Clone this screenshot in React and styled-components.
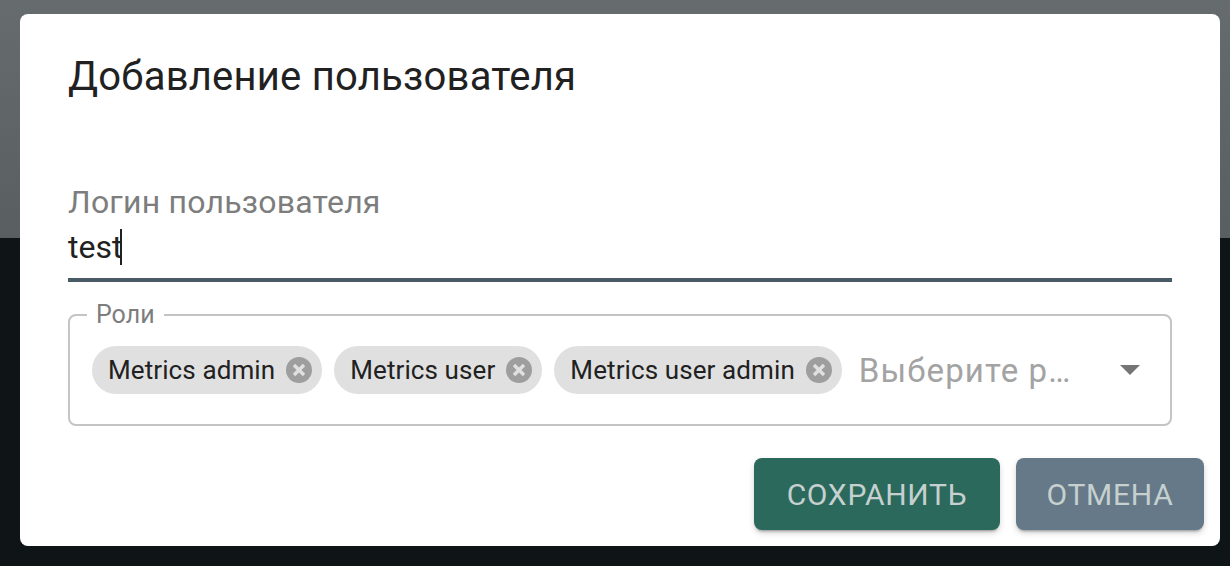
import React from 'react';
import styled, { createGlobalStyle } from 'styled-components';

const GlobalStyle = createGlobalStyle`
  html, body {
    margin: 0;
    padding: 0;
    height: 100%;
    overflow: hidden;
    background: #0f1416;
    font-family: Roboto, "Liberation Sans", sans-serif;
  }
`;

const Backdrop = styled.div`
  box-sizing: border-box;
  width: 1230px;
  height: 566px;
  padding: 14px 10px 20px 20px;
  background: linear-gradient(180deg, #666b6d 0, #595e60 238px, #0f1416 238px);
`;

const Dialog = styled.div`
  box-sizing: border-box;
  display: flex;
  flex-direction: column;
  height: 532px;
  padding: 0 16px 16px 48px;
  background: #fff;
  border-radius: 8px;
`;

const Title = styled.h2`
  margin: 38px 0 0;
  font-size: 40px;
  line-height: 50px;
  font-weight: 400;
  letter-spacing: 0.22px;
  color: #212121;
`;

const LoginField = styled.div`
  display: flex;
  flex-direction: column;
  margin: 82px 32px 0 0;
  border-bottom: 4px solid #4a5b68;
`;

const FieldLabel = styled.label`
  font-size: 32px;
  line-height: 36px;
  letter-spacing: 0.22px;
  color: #7d7d7d;
`;

const FieldValue = styled.div`
  display: flex;
  align-items: center;
  height: 54px;
  margin-bottom: 4px;
  font-size: 32px;
  color: #212121;
`;

const Caret = styled.span`
  width: 2px;
  height: 36px;
  margin-left: -2px;
  background: #212121;
`;

const RolesBox = styled.fieldset`
  box-sizing: border-box;
  display: flex;
  align-items: center;
  gap: 17px;
  height: 123px;
  margin: 21px 32px 0 0;
  padding: 19px 22px 0 22px;
  border: 2px solid #c4c4c4;
  border-radius: 8px;
`;

const RolesLegend = styled.legend`
  margin-left: -5px;
  padding: 0 9px;
  font-size: 25px;
  line-height: 24px;
  color: #7d7d7d;
`;

const Chips = styled.div`
  display: flex;
  align-items: center;
  gap: 12px;
`;

const Chip = styled.div`
  display: flex;
  align-items: center;
  gap: 11px;
  height: 48px;
  padding: 0 10px 0 16px;
  background: #e0e0e0;
  border-radius: 24px;
  font-size: 26px;
  letter-spacing: 0.1px;
  color: #212121;
  white-space: nowrap;
`;

const RolesPlaceholder = styled.span`
  flex: 1;
  font-size: 33px;
  letter-spacing: 1.1px;
  color: #a3a3a3;
  white-space: nowrap;
`;

const ArrowIcon = styled.svg`
  flex: none;
  width: 20px;
  height: 10px;
  margin-right: 8px;
  fill: #757575;
`;

const Actions = styled.div`
  display: flex;
  justify-content: flex-end;
  gap: 16px;
  margin-top: 32px;
`;

const ActionButton = styled.button`
  height: 72px;
  width: ${(p) => p.$width}px;
  padding: 0;
  border: 0;
  border-radius: 8px;
  background: ${(p) => p.$bg};
  color: #c5d0cf;
  font-family: inherit;
  font-size: 30px;
  letter-spacing: 0.7px;
  box-shadow: 0 3px 3px -2px rgba(0, 0, 0, 0.35), 0 3px 6px rgba(0, 0, 0, 0.16);
`;

const ChipRemove = () => (
  <svg width="26" height="26" viewBox="0 0 26 26">
    <circle cx="13" cy="13" r="13" fill="#9e9e9e" />
    <path d="M8 8l10 10M18 8L8 18" stroke="#e0e0e0" strokeWidth="3.4" />
  </svg>
);

const roles = ['Metrics admin', 'Metrics user', 'Metrics user admin'];

const App = () => {
  return (
    <Backdrop>
      <GlobalStyle />
      <Dialog>
        <Title>Добавление пользователя</Title>

        {/* Login */}
        <LoginField>
          <FieldLabel>Логин пользователя</FieldLabel>
          <FieldValue>
            test
            <Caret />
          </FieldValue>
        </LoginField>

        {/* Roles */}
        <RolesBox>
          <RolesLegend>Роли</RolesLegend>
          <Chips>
            {roles.map((role) => (
              <Chip key={role}>
                {role}
                <ChipRemove />
              </Chip>
            ))}
          </Chips>
          <RolesPlaceholder>Выберите р…</RolesPlaceholder>
          <ArrowIcon viewBox="0 0 20 10">
            <path d="M0 0h20L10 10z" />
          </ArrowIcon>
        </RolesBox>

        <Actions>
          <ActionButton $width={246} $bg="#2b695c">СОХРАНИТЬ</ActionButton>
          <ActionButton $width={188} $bg="#657988">ОТМЕНА</ActionButton>
        </Actions>
      </Dialog>
    </Backdrop>
  );
};

export default App;
